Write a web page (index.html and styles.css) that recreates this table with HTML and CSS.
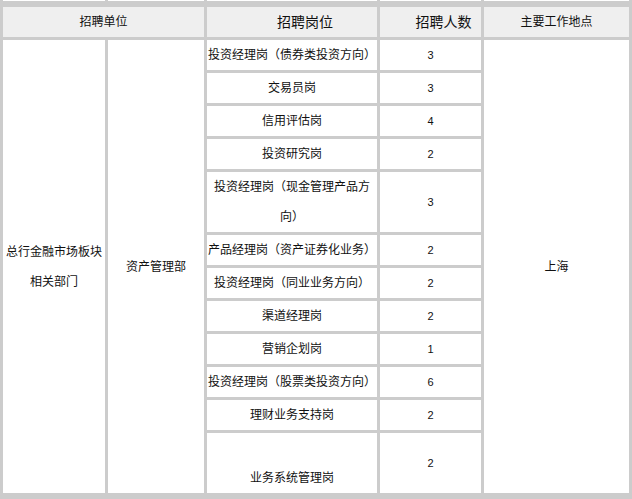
FILE: index.html
```html
<!DOCTYPE html>
<html lang="zh-CN">
<head>
<meta charset="utf-8">
<title>招聘岗位</title>
<link rel="stylesheet" href="styles.css">
</head>
<body>
<table class="jobs">
  <colgroup>
    <col class="c1"><col class="c2"><col class="c3"><col class="c4"><col class="c5">
  </colgroup>
  <tr class="cut"><td></td><td></td><td></td><td></td><td></td></tr>
  <tr class="head">
    <th colspan="2">招聘单位</th>
    <th class="big shift">招聘岗位</th>
    <th class="big shift">招聘人数</th>
    <th>主要工作地点</th>
  </tr>
  <tr>
    <td rowspan="12">总行金融市场板块<br>相关部门</td>
    <td rowspan="12">资产管理部</td>
    <td>投资经理岗（债券类投资方向）</td>
    <td class="num">3</td>
    <td rowspan="12">上海</td>
  </tr>
  <tr><td>交易员岗</td><td class="num">3</td></tr>
  <tr><td>信用评估岗</td><td class="num">4</td></tr>
  <tr><td>投资研究岗</td><td class="num">2</td></tr>
  <tr><td>投资经理岗（现金管理产品方向）</td><td class="num">3</td></tr>
  <tr><td>产品经理岗（资产证券化业务）</td><td class="num">2</td></tr>
  <tr><td>投资经理岗（同业业务方向）</td><td class="num">2</td></tr>
  <tr><td>渠道经理岗</td><td class="num">2</td></tr>
  <tr><td>营销企划岗</td><td class="num">1</td></tr>
  <tr><td>投资经理岗（股票类投资方向）</td><td class="num">6</td></tr>
  <tr><td>理财业务支持岗</td><td class="num">2</td></tr>
  <tr><td><br>业务系统管理岗</td><td class="num">2</td></tr>
</table>
</body>
</html>
```

FILE: styles.css
```css
html, body {
  margin: 0;
  padding: 0;
  background: #cccccc;
  overflow: hidden;
}

.jobs {
  width: 632px;
  table-layout: fixed;
  border-collapse: separate;
  border-spacing: 3px;
  margin-top: -3px;
  font-family: "Liberation Sans", "Noto Sans CJK SC", sans-serif;
  font-size: 12px;
  color: #111111;
}

.c1 { width: 102px; }
.c2 { width: 96px; }
.c3 { width: 170px; }
.c4 { width: 101px; }
.c5 { width: 145px; }

.jobs td,
.jobs th {
  padding: 0;
  background: #ffffff;
  text-align: center;
  vertical-align: middle;
  line-height: 30px;
  font-weight: normal;
}

.jobs td.num {
  font-size: 11px;
}

.cut td {
  height: 1px;
  line-height: 1px;
  font-size: 1px;
}

.head th {
  background: #efefef;
  border-top: 3px solid #cccccc;
  height: 30px;
}

.head th.big {
  font-size: 14px;
}

.head th.shift {
  padding-left: 26px;
}
```
